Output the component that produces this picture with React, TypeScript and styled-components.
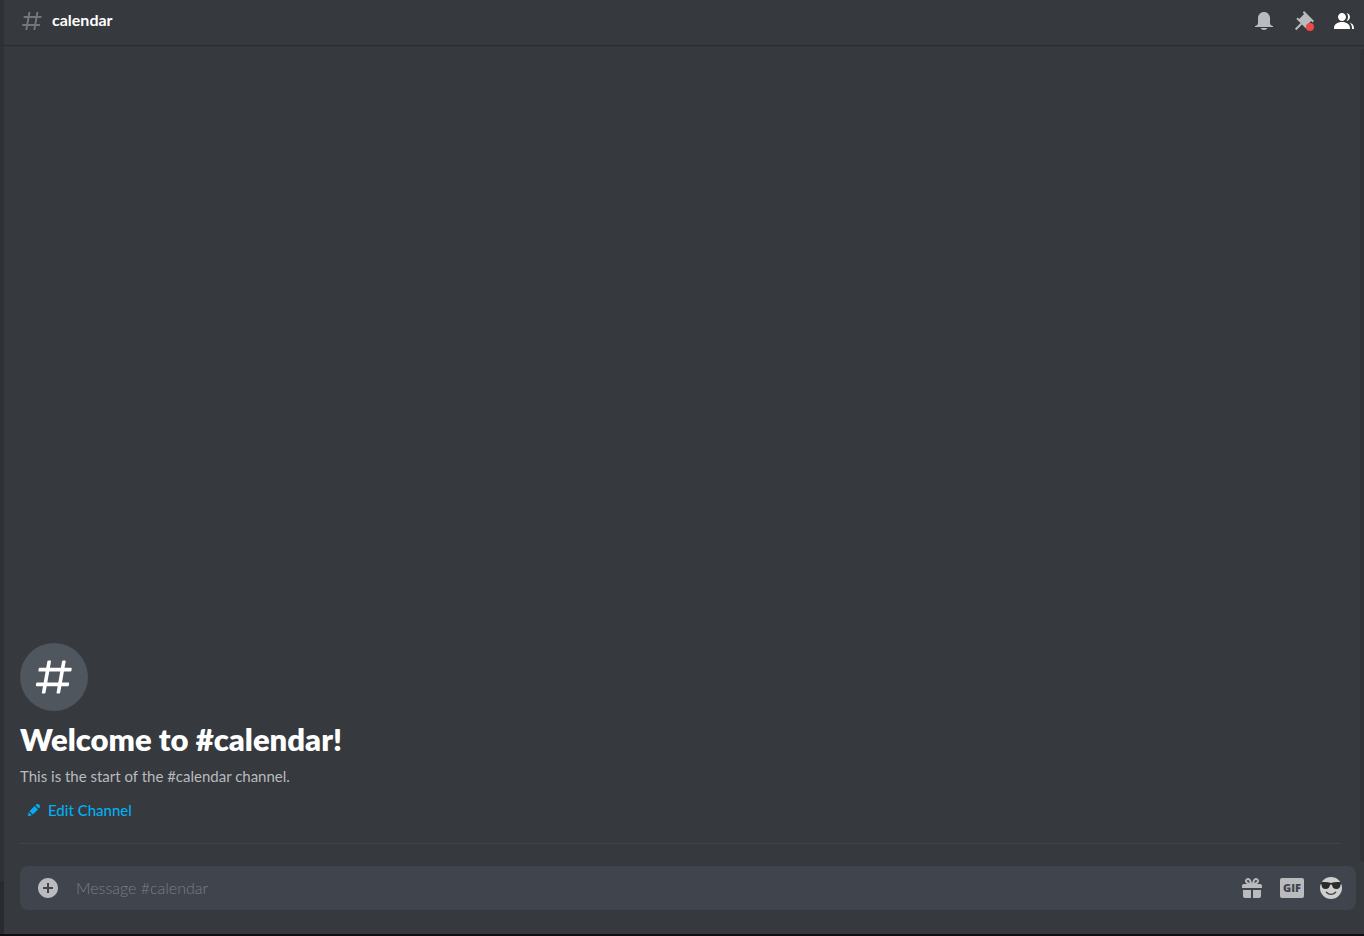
import React from "react";
import styled, { createGlobalStyle } from "styled-components";

const color = {
  chat: "#36393e",
  sidebar: "#2f3136",
  userPanel: "#292b2f",
  field: "#40444d",
  badgeCircle: "#4f565e",
  icon: "#b9bbbe",
  muted: "#72767d",
  placeholder: "#7a7e86",
  link: "#00aff4",
  rule: "#42454a",
  edge: "#0e0f11",
};

const GlobalStyle = createGlobalStyle`
  *, *::before, *::after { box-sizing: border-box; }
  body {
    margin: 0;
    background: ${color.chat};
    color: #fff;
    font-family: Lato, "Open Sans", sans-serif;
    font-size: 15px;
  }
  button { font: inherit; color: inherit; }
`;

const Window = styled.div`
  display: flex;
  min-height: 100vh;
  border-bottom: 2px solid ${color.edge};
`;

const SidebarEdge = styled.aside`
  display: flex;
  flex-direction: column;
  flex: 0 0 4px;
  background: ${color.sidebar};
`;

const SidebarHeader = styled.div`
  height: 45px;
  box-shadow: 0 1px 0 #292b2f;
`;

const UserPanelEdge = styled.div`
  height: 53px;
  margin-top: auto;
  background: ${color.userPanel};
`;

const Channel = styled.div`
  display: flex;
  flex: 1;
  flex-direction: column;
  min-width: 0;
`;

const Header = styled.header`
  display: flex;
  align-items: center;
  height: 45px;
  padding: 0 8px 4px 16px;
  box-shadow: 0 1px 0 #2b2d32, 0 2px 0 #33363b;
`;

const ChannelName = styled.h1`
  margin: 0 auto 0 8px;
  padding-bottom: 2px;
  font-size: 16px;
  font-weight: 700;
  line-height: 20px;
`;

const Toolbar = styled.div`
  display: flex;
  gap: 16px;
`;

const IconButton = styled.button<{ $active?: boolean }>`
  display: flex;
  position: relative;
  padding: 0;
  border: 0;
  background: none;
  color: ${(p) => (p.$active ? "#fff" : color.icon)};
  cursor: pointer;
`;

const UnreadDot = styled.span`
  position: absolute;
  right: 2px;
  bottom: 2px;
  width: 8px;
  height: 8px;
  border-radius: 50%;
  background: #f04747;
`;

const Content = styled.div`
  display: flex;
  flex: 1;
`;

const Messages = styled.main`
  display: flex;
  flex: 1;
  flex-direction: column;
  justify-content: flex-end;
  padding: 0 19px 22px 16px;
`;

const MemberListEdge = styled.div`
  width: 4px;
  margin: 4px 0;
  border-radius: 4px 0 0 4px;
  background: ${color.sidebar};
`;

const Welcome = styled.section`
  display: flex;
  flex-direction: column;
  align-items: flex-start;
  padding-bottom: 20px;
  border-bottom: 1px solid ${color.rule};
`;

const HashCircle = styled.div`
  display: grid;
  place-items: center;
  width: 68px;
  height: 68px;
  border-radius: 50%;
  background: ${color.badgeCircle};
`;

const Title = styled.h2`
  margin: 8px 0 7px;
  font-size: 31px;
  font-weight: 800;
  line-height: 40px;
`;

const Description = styled.p`
  margin: 0;
  color: ${color.icon};
  line-height: 20px;
`;

const EditButton = styled.button`
  display: flex;
  align-items: center;
  gap: 6px;
  margin-top: 11px;
  padding: 3px 6px;
  border: 0;
  background: none;
  color: ${color.link};
  font-weight: 500;
  line-height: 20px;
  cursor: pointer;
`;

const Composer = styled.form`
  display: flex;
  align-items: center;
  gap: 16px;
  height: 44px;
  margin: 0 8px 24px 16px;
  padding: 0 14px 0 16px;
  border-radius: 8px;
  background: ${color.field};
`;

const MessageInput = styled.input`
  flex: 1;
  min-width: 0;
  padding: 0;
  border: 0;
  outline: 0;
  background: none;
  color: #dcddde;
  font: 300 16px/20px Lato, "Open Sans", sans-serif;
  &::placeholder { color: ${color.placeholder}; opacity: 1; }
`;

const GifLabel = styled.span`
  width: 24px;
  height: 20px;
  border-radius: 2px;
  background: ${color.icon};
  color: ${color.field};
  font: 800 11px/20px "Open Sans", sans-serif;
  text-align: center;
`;

const HASH =
  "M5.88657 21C5.57547 21 5.3399 20.7189 5.39427 20.4126L6.00001 17H2.59511C2.28449 17 2.04905 16.7198 2.10259 16.4138L2.27759 15.4138C2.31946 15.1746 2.52722 15 2.77011 15H6.35001L7.41001 9H4.00511C3.69449 9 3.45905 8.71977 3.51259 8.41381L3.68759 7.41381C3.72946 7.17456 3.93722 7 4.18011 7H7.76001L8.39677 3.41262C8.43914 3.17391 8.64664 3 8.88907 3H9.87344C10.1845 3 10.4201 3.28107 10.3657 3.58738L9.76001 7H15.76L16.3968 3.41262C16.4391 3.17391 16.6466 3 16.8891 3H17.8734C18.1845 3 18.4201 3.28107 18.3657 3.58738L17.76 7H21.1649C21.4755 7 21.711 7.28023 21.6574 7.58619L21.4824 8.58619C21.4406 8.82544 21.2328 9 20.9899 9H17.41L16.35 15H19.7549C20.0655 15 20.301 15.2802 20.2474 15.5862L20.0724 16.5862C20.0306 16.8254 19.8228 17 19.5799 17H16L15.3632 20.5874C15.3209 20.8261 15.1134 21 14.8709 21H13.8866C13.5755 21 13.3399 20.7189 13.3943 20.4126L14 17H8.00001L7.36325 20.5874C7.32088 20.8261 7.11337 21 6.87094 21H5.88657ZM9.41045 9L8.35045 15H14.3504L15.4104 9H9.41045Z";
const BELL =
  "M18 9V14C18 15.657 19.344 17 21 17V18H3V17C4.656 17 6 15.657 6 14V9C6 5.686 8.686 3 12 3C15.314 3 18 5.686 18 9ZM12 21C10.524 21 9.248 20.19 8.555 19H15.445C14.752 20.19 13.476 21 12 21Z";
const PIN =
  "M22 12L12.101 2.101L10.686 3.514L12.101 4.929L7.151 9.878V9.88L5.736 8.465L4.322 9.88L8.565 14.122L2.908 19.778L4.322 21.192L9.979 15.536L14.222 19.778L15.636 18.364L14.222 16.95L19.171 12H19.172L20.586 13.414L22 12Z";
const MEMBERS =
  "M14 8.006C14 10.211 12.206 12.006 10 12.006C7.795 12.006 6 10.211 6 8.006C6 5.801 7.794 4.006 10 4.006C12.206 4.006 14 5.801 14 8.006ZM2 19.006C2 15.473 5.29 13.006 10 13.006C14.711 13.006 18 15.473 18 19.006V20.006H2V19.006ZM20 20.006H22V19.006C22 16.443 20.27 14.442 17.521 13.535C19.062 14.913 20 16.806 20 19.006V20.006ZM14.883 11.908C16.666 11.504 18 9.908 18 8.006C18 5.969 16.469 4.282 14.497 4.037C15.432 5.095 16 6.485 16 8.006C16 9.449 15.489 10.774 14.638 11.81C14.72 11.842 14.802 11.874 14.883 11.908Z";
const PENCIL =
  "M19.293 9.83L19.941 9.183C21.353 7.771 21.353 5.472 19.941 4.059C18.529 2.647 16.229 2.647 14.817 4.059L14.17 4.707L19.293 9.83ZM12.896 5.977L5.185 13.691L10.309 18.813L18.02 11.099L12.896 5.977ZM4.119 20.97L8.759 19.811L4.187 15.239L3.027 19.88C2.95 20.186 3.04 20.511 3.263 20.734C3.487 20.957 3.812 21.046 4.119 20.97Z";
const PLUS =
  "M12 2C6.486 2 2 6.486 2 12C2 17.514 6.486 22 12 22C17.514 22 22 17.514 22 12C22 6.486 17.514 2 12 2ZM17 13H13V17H11V13H7V11H11V7H13V11H17V13Z";
const GIFT =
  "M16.886 8H20C21.104 8 22 8.896 22 10V12H2V10C2 8.896 2.897 8 4 8H7.114C6.663 7.764 6.236 7.477 5.879 7.121C4.709 5.951 4.709 4.048 5.879 2.879C7.012 1.746 8.986 1.746 10.121 2.877C11.758 4.514 11.979 7.595 11.998 7.941L11.99 8H12.01L12.002 7.942C12.022 7.596 12.242 4.515 13.879 2.878C15.014 1.745 16.986 1.746 18.121 2.877C19.29 4.049 19.29 5.952 18.121 7.121C17.764 7.477 17.337 7.764 16.886 8ZM7.293 5.707C6.903 5.316 6.903 4.682 7.293 4.292C7.481 4.103 7.732 4 8 4C8.268 4 8.519 4.103 8.707 4.292C9.297 4.882 9.641 5.94 9.825 6.822C8.945 6.639 7.879 6.293 7.293 5.707ZM14.174 6.824C14.359 5.941 14.702 4.883 15.293 4.293C15.481 4.103 15.732 4 16 4C16.268 4 16.519 4.103 16.706 4.291C17.096 4.682 17.097 5.316 16.707 5.707C16.116 6.298 15.057 6.642 14.174 6.824ZM3 14V20C3 21.103 3.897 22 5 22H11V14H3ZM13 14V22H19C20.104 22 21 21.103 21 20V14H13Z";

function Icon({ path, size = 24, fill = "currentColor" }: { path: string; size?: number; fill?: string }) {
  return (
    <svg width={size} height={size} viewBox="0 0 24 24" aria-hidden="true">
      <path d={path} fill={fill} fillRule="evenodd" clipRule="evenodd" />
    </svg>
  );
}

function SunglassesEmoji() {
  return (
    <svg width="22" height="22" viewBox="0 0 22 22" aria-hidden="true">
      <circle cx="11" cy="11" r="11" fill="#cfcfcf" />
      <path
        d="M.9 5.4C4 4.9 8 5 11 5.9C14 5 18 4.9 21.1 5.4L21.3 7L20.5 7.5C20.3 10.4 19.4 12 16.4 12C13.6 12 12.6 10.5 12 8C11.8 7.2 10.2 7.2 10 8C9.4 10.5 8.4 12 5.6 12C2.6 12 1.7 10.4 1.5 7.5L.7 7Z"
        fill="#2b2b2b"
      />
      <path d="M6.4 15.3C8.8 18.1 13.2 18.1 15.6 15.3" fill="none" stroke="#444" strokeWidth="1.4" strokeLinecap="round" />
    </svg>
  );
}

export default function App() {
  return (
    <>
      <GlobalStyle />
      <Window>
        <SidebarEdge>
          <SidebarHeader />
          <UserPanelEdge />
        </SidebarEdge>
        <Channel>
          <Header>
            <Icon path={HASH} fill={color.muted} />
            <ChannelName>calendar</ChannelName>
            <Toolbar>
              <IconButton type="button" aria-label="Notification settings">
                <Icon path={BELL} />
              </IconButton>
              <IconButton type="button" aria-label="Pinned messages">
                <Icon path={PIN} />
                <UnreadDot />
              </IconButton>
              <IconButton type="button" aria-label="Member list" $active>
                <Icon path={MEMBERS} />
              </IconButton>
            </Toolbar>
          </Header>
          <Content>
            <Messages>
              <Welcome>
                <HashCircle>
                  <Icon path={HASH} size={44} fill="#fff" />
                </HashCircle>
                <Title>Welcome to #calendar!</Title>
                <Description>This is the start of the #calendar channel.</Description>
                <EditButton type="button">
                  <Icon path={PENCIL} size={16} />
                  Edit Channel
                </EditButton>
              </Welcome>
            </Messages>
            <MemberListEdge />
          </Content>
          <Composer onSubmit={(e) => e.preventDefault()}>
            <IconButton type="button" aria-label="Attach a file">
              <Icon path={PLUS} />
            </IconButton>
            <MessageInput type="text" aria-label="Message #calendar" placeholder="Message #calendar" />
            <IconButton type="button" aria-label="Send a gift">
              <Icon path={GIFT} />
            </IconButton>
            <IconButton type="button" aria-label="Open GIF picker">
              <GifLabel>GIF</GifLabel>
            </IconButton>
            <IconButton type="button" aria-label="Select emoji">
              <SunglassesEmoji />
            </IconButton>
          </Composer>
        </Channel>
      </Window>
    </>
  );
}
